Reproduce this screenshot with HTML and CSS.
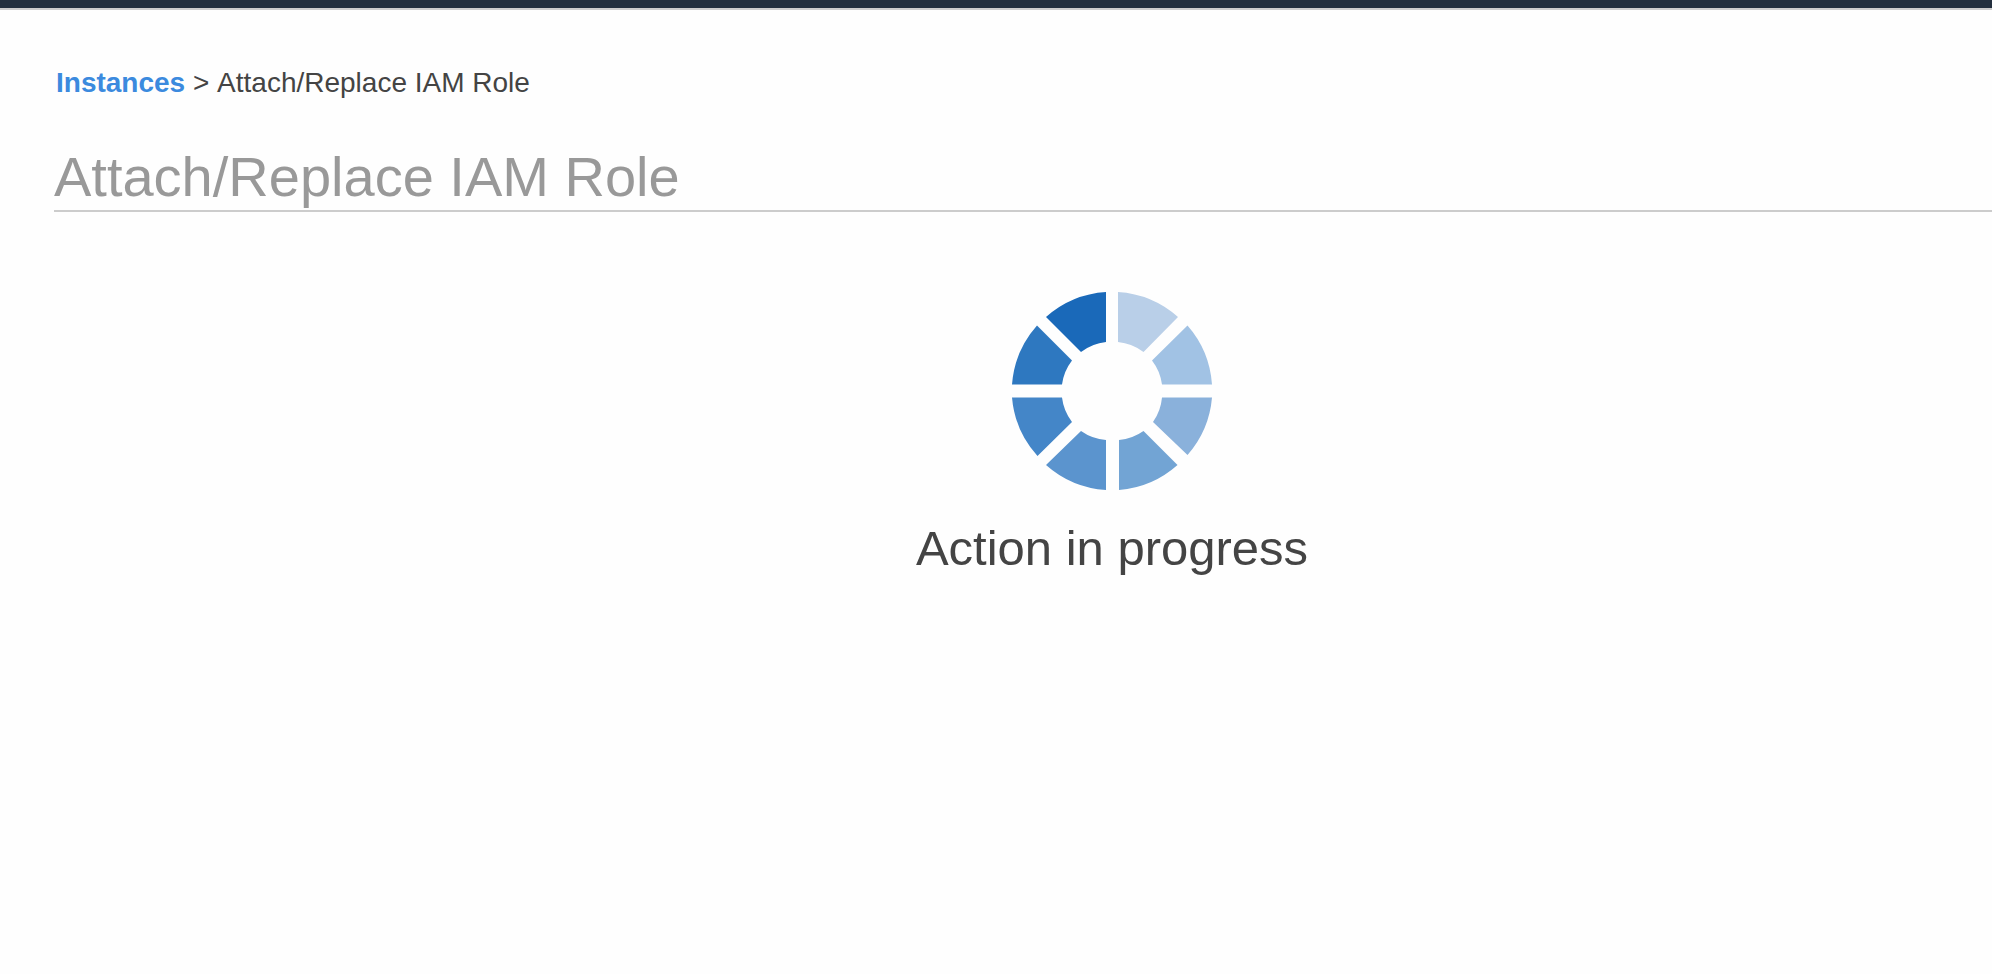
FILE: index.html
```html
<!DOCTYPE html>
<html lang="en">
<head>
<meta charset="utf-8">
<title>Attach/Replace IAM Role</title>
<link rel="stylesheet" href="styles.css">
</head>
<body>
<header class="topbar"></header>
<main class="page">
  <nav class="breadcrumb" aria-label="Breadcrumb">
    <a class="breadcrumb-link" href="#">Instances</a> &gt; <span>Attach/Replace IAM Role</span>
  </nav>
  <h1 class="title">Attach/Replace IAM Role</h1>
  <section class="progress" role="status">
    <svg class="spinner" width="200" height="198" viewBox="0 0 200 198" aria-hidden="true">
      <path fill="#b9cfe8" d="M106 0A100 100 0 0 1 166 25L131.500 60A50 50 0 0 0 106 50Z"/>
      <path fill="#a1c2e4" d="M175.500 33.500A100 100 0 0 1 200 92.500H150A50 50 0 0 0 140 68.500Z"/>
      <path fill="#8ab1db" d="M150 105.500H200A100 100 0 0 1 175.500 163L141 130A50 50 0 0 0 150 105.500Z"/>
      <path fill="#72a4d4" d="M107 148A50 50 0 0 0 131.500 139L165.500 173A100 100 0 0 1 107 198Z"/>
      <path fill="#5b94ce" d="M94 148V198A100 100 0 0 1 34 173L69 139A50 50 0 0 0 94 148Z"/>
      <path fill="#4486c8" d="M0 105.500H50A50 50 0 0 0 60 130L25.500 164A100 100 0 0 1 0 105.500Z"/>
      <path fill="#2e78c0" d="M0 92.500A100 100 0 0 1 25 33.500L60 68.500A50 50 0 0 0 50 92.500Z"/>
      <path fill="#1a69b9" d="M34 25A100 100 0 0 1 94 0V50A50 50 0 0 0 69 60Z"/>
    </svg>
    <p class="progress-text">Action in progress</p>
  </section>
</main>
</body>
</html>
```
FILE: styles.css
```css
body {
  margin: 0;
  background: #fefefe;
  color: #444;
  font-family: "Liberation Sans", Arial, sans-serif;
  font-kerning: none;
}

.topbar {
  height: 8px;
  background: #232f3e;
  border-bottom: 2px solid #ccc;
}

.page {
  padding: 57px 0 0 54px;
}

.breadcrumb {
  padding-left: 2px;
  font-size: 28px;
  line-height: 32px;
}

.breadcrumb-link {
  color: #3b8ade;
  font-weight: bold;
  text-decoration: none;
}

.title {
  margin: 47px 0 0;
  padding-bottom: 2px;
  border-bottom: 2px solid #ccc;
  color: #999;
  font-size: 56px;
  font-weight: normal;
  line-height: 62px;
}

.progress {
  display: flex;
  flex-direction: column;
  align-items: center;
  gap: 30px;
  padding: 80px 0 0 178px;
}

.progress-text {
  margin: 0;
  font-size: 49px;
  line-height: 56px;
}
```
